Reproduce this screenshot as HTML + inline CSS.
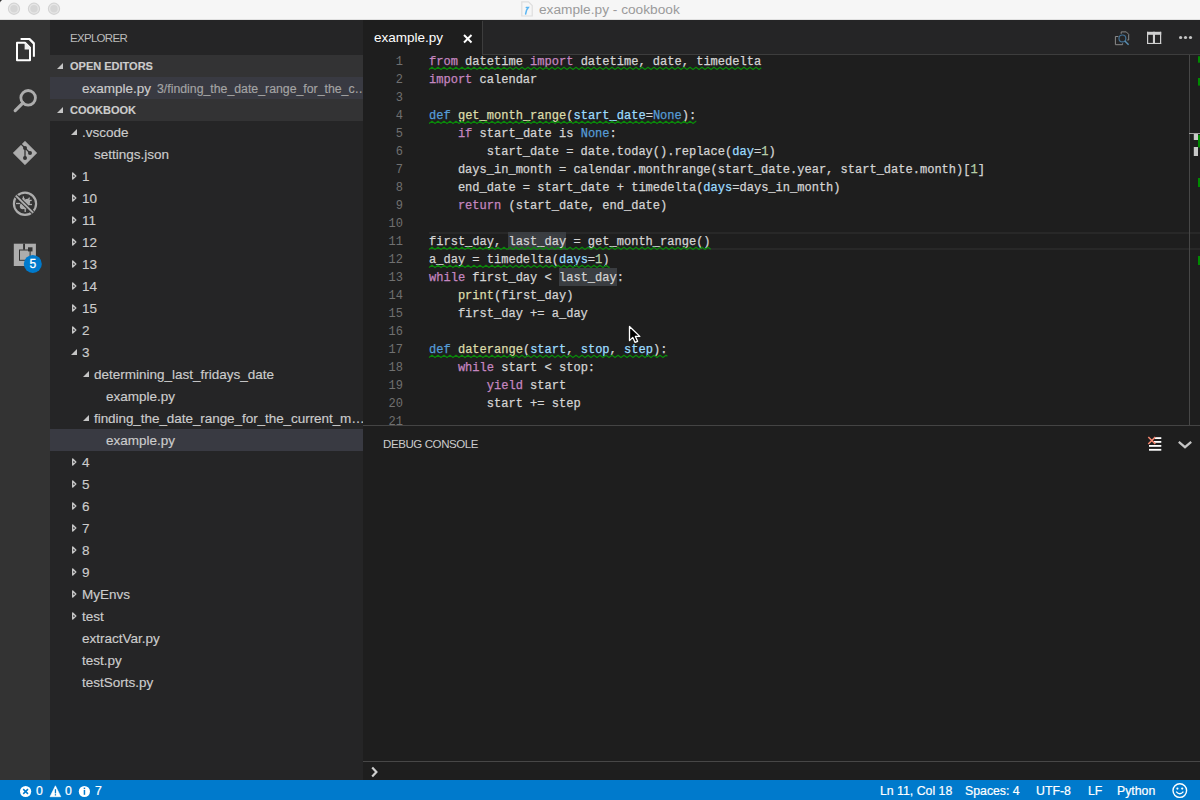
<!DOCTYPE html>
<html><head><meta charset="utf-8">
<style>
*{margin:0;padding:0;box-sizing:border-box}
html,body{width:1200px;height:800px;overflow:hidden;background:#1e1e1e;font-family:"Liberation Sans",sans-serif}
.abs{position:absolute}
#title{left:0;top:0;width:1200px;height:20px;background:#f6f6f6;border-bottom:1px solid #e0e0e0}
.tl{position:absolute;top:3px;width:12px;height:12px;border-radius:50%;background:#dadada;border:1px solid #cfcfcf}
#ttext{position:absolute;left:539px;top:1px;font-size:13.7px;line-height:17px;color:#9b9b9b;white-space:nowrap}
#act{left:0;top:20px;width:50px;height:760px;background:#333333}
#side{left:50px;top:20px;width:313px;height:760px;background:#252526;overflow:hidden}
.row{position:absolute;left:0;width:313px;height:22px;font-size:13.5px;line-height:23px;color:#cccccc;white-space:nowrap;-webkit-text-stroke:0.15px currentColor}
.hdr{background:#333334;font-weight:bold;font-size:11px;color:#cccccc}
.sel{background:#393a42}
.tw{position:absolute;width:0;height:0}
.tw.open{border-left:6px solid transparent;border-bottom:6px solid #c5c5c5;top:8px}
.twc{position:absolute;top:6px}
#tabs{left:363px;top:20px;width:837px;height:35px;background:#252526}
#tab{position:absolute;left:0;top:0;width:119px;height:35px;background:#1e1e1e;color:#ffffff;font-size:13.5px}
#editor{left:363px;top:55px;width:837px;height:370px;background:#1e1e1e;overflow:hidden}
.code{position:absolute;left:66px;margin-top:1px;font-family:"Liberation Mono",monospace;font-size:12.04px;line-height:18px;height:18px;color:#d4d4d4;white-space:pre;-webkit-text-stroke:0.25px currentColor}
.ln{position:absolute;left:0;margin-top:1px;width:40px;text-align:right;font-family:"Liberation Mono",monospace;font-size:12px;line-height:18px;height:18px;color:#707070}
.k{color:#c586c0}.d{color:#569cd6}.f{color:#dcdcaa}.p{color:#9cdcfe}.n{color:#b5cea8}
.curline{position:absolute;left:66px;width:771px;height:18px;border-top:2px solid #282828;border-bottom:2px solid #282828}
.wh{position:absolute;width:57.8px;height:18px;background:#3a3d41}
#panel{left:363px;top:425px;width:837px;height:355px;background:#1e1e1e;border-top:1px solid #444}
.st{position:absolute;top:4px;line-height:14px;font-size:12.3px;white-space:nowrap;-webkit-text-stroke:0.2px #fff}
#status{left:0;top:780px;width:1200px;height:20px;background:#007acc;color:#fff;font-size:12px}
</style></head>
<body>
<div id="title" class="abs">
  <svg style="position:absolute;left:0;top:0" width="70" height="19"><path d="M0,0 H2.2 Q0.6,0.6 0,2.6 Z" fill="#333"/><g id="tlc">
<circle cx="14" cy="8.75" r="5.6" fill="#e6e6e6" stroke="#d3d3d3" stroke-width="1.1"/><circle cx="14" cy="8.75" r="3.7" fill="#d6d6d6"/></g>
<circle cx="34" cy="8.75" r="5.6" fill="#e6e6e6" stroke="#d3d3d3" stroke-width="1.1"/><circle cx="34" cy="8.75" r="3.7" fill="#d6d6d6"/>
<circle cx="54" cy="8.75" r="5.6" fill="#e6e6e6" stroke="#d3d3d3" stroke-width="1.1"/><circle cx="54" cy="8.75" r="3.7" fill="#d6d6d6"/></svg>
  <svg style="position:absolute;left:519px;top:0" width="16" height="20"><path d="M2.8,1.8 H9.5 L13.2,5.5 V16 H2.8 Z" fill="#f6f6f6" stroke="#dedede" stroke-width="1.2"/><path d="M7.3,7.6 H9.3 L7.6,10 L6.6,14" fill="none" stroke="#5cb6f2" stroke-width="1.5" stroke-linecap="round"/></svg>
  <div id="ttext">example.py - cookbook</div>
</div>
<div id="act" class="abs"></div>
<svg class="abs" style="left:0;top:0" width="50" height="300" viewBox="0 0 50 300">
<g fill="none" stroke="#ffffff" stroke-width="2" stroke-linejoin="round">
<path d="M17,42.8 H25 L30,47.8 V60.2 H17 Z"/>
<path d="M20.6,38.9 H29.6 L33.9,43.2 V56.8"/><path d="M29.6,38.9 L33.9,43.2 L33.9,45 L28.6,39.7 Z" fill="#ffffff" stroke="none"/>
</g>
<path d="M24.6,42 L31,48.4 V49.5 H24.6 Z" fill="#eeeeee"/>
<g stroke="#adadad" fill="none">
<circle cx="28.15" cy="97.8" r="7.3" stroke-width="2.8"/>
<line x1="15.2" y1="110.6" x2="23" y2="102.8" stroke-width="3.2" stroke-linecap="round"/>
</g>
<path d="M25,141.2 L36.8,153 L25,164.8 L13.2,153 Z" fill="#adadad" stroke="#adadad" stroke-width="0.6" stroke-linejoin="round"/>
<g stroke="#333333" stroke-width="1.3" fill="none">
<line x1="20.4" y1="143.4" x2="25" y2="148"/>
<line x1="25" y1="148" x2="25" y2="158"/>
<line x1="25" y1="148" x2="30" y2="153"/>
</g>
<g fill="#333333"><circle cx="25" cy="148" r="2"/><circle cx="30" cy="153" r="2"/><circle cx="25" cy="158" r="2"/></g>
<circle cx="25" cy="203.75" r="11.1" stroke="#adadad" stroke-width="2.2" fill="none"/>
<ellipse cx="25" cy="204" rx="3.9" ry="6.3" transform="rotate(45 25 204)" fill="#adadad"/>
<g stroke="#adadad" stroke-width="1.3" fill="none">
<path d="M16,203.5 H20"/>
<path d="M23.4,196.4 V200.6"/>
<path d="M22,199 H25"/>
<path d="M28,204.5 H32"/>
<path d="M25.2,207.5 V212"/>
<path d="M24,208.5 H27"/>
<path d="M29.6,197.6 L28.4,199.4"/>
<path d="M27.5,200.4 H31.7"/>
</g>
<line x1="15.8" y1="195.6" x2="33" y2="212.6" stroke="#333333" stroke-width="4"/>
<line x1="15.8" y1="195.6" x2="33" y2="212.6" stroke="#adadad" stroke-width="2"/>
<g>
<rect x="13.8" y="243.7" width="22.1" height="22.3" fill="#adadad"/>
<rect x="23.1" y="243.7" width="1.9" height="6" fill="#333333"/>
<rect x="19" y="249.5" width="11.6" height="11.3" fill="#333333"/>
<rect x="20" y="250.5" width="9.6" height="9.3" fill="#adadad"/>
<rect x="28" y="247.3" width="4.5" height="4.1" fill="#333333"/>
</g>
<circle cx="32.8" cy="263.9" r="9" fill="#007acc"/>
<text x="32.8" y="268.2" font-family="Liberation Sans" font-size="12" fill="#ffffff" stroke="#ffffff" stroke-width="0.3" text-anchor="middle">5</text>
</svg>
<div id="side" class="abs">
<div style="position:absolute;left:20px;top:11px;font-size:11.5px;letter-spacing:-0.7px;line-height:14px;color:#bbbbbb">EXPLORER</div>
<div class="row hdr" style="top:35px"><i class="tw open" style="left:7px"></i><span style="position:absolute;left:20px">OPEN EDITORS</span></div>
<div class="row sel" style="top:57px"><span style="position:absolute;left:32px">example.py</span><span style="position:absolute;left:107px;top:1px;font-size:12.3px;color:#a4a4a4">3/finding_the_date_range_for_the_c&#8230;</span></div>
<div class="row hdr" style="top:79px"><i class="tw open" style="left:7px"></i><span style="position:absolute;left:20px">COOKBOOK</span></div>
<div class="row" style="top:101px"><i class="tw open" style="left:21px"></i><span style="position:absolute;left:32px">.vscode</span></div>
<div class="row" style="top:123px"><span style="position:absolute;left:44px">settings.json</span></div>
<div class="row" style="top:145px"><svg class="twc" style="left:21px" width="8" height="10"><path d="M1.7,2 L4.8,5 L1.7,8 Z" fill="none" stroke="#c5c5c5" stroke-width="1.4" stroke-linejoin="round"/></svg><span style="position:absolute;left:32px">1</span></div>
<div class="row" style="top:167px"><svg class="twc" style="left:21px" width="8" height="10"><path d="M1.7,2 L4.8,5 L1.7,8 Z" fill="none" stroke="#c5c5c5" stroke-width="1.4" stroke-linejoin="round"/></svg><span style="position:absolute;left:32px">10</span></div>
<div class="row" style="top:189px"><svg class="twc" style="left:21px" width="8" height="10"><path d="M1.7,2 L4.8,5 L1.7,8 Z" fill="none" stroke="#c5c5c5" stroke-width="1.4" stroke-linejoin="round"/></svg><span style="position:absolute;left:32px">11</span></div>
<div class="row" style="top:211px"><svg class="twc" style="left:21px" width="8" height="10"><path d="M1.7,2 L4.8,5 L1.7,8 Z" fill="none" stroke="#c5c5c5" stroke-width="1.4" stroke-linejoin="round"/></svg><span style="position:absolute;left:32px">12</span></div>
<div class="row" style="top:233px"><svg class="twc" style="left:21px" width="8" height="10"><path d="M1.7,2 L4.8,5 L1.7,8 Z" fill="none" stroke="#c5c5c5" stroke-width="1.4" stroke-linejoin="round"/></svg><span style="position:absolute;left:32px">13</span></div>
<div class="row" style="top:255px"><svg class="twc" style="left:21px" width="8" height="10"><path d="M1.7,2 L4.8,5 L1.7,8 Z" fill="none" stroke="#c5c5c5" stroke-width="1.4" stroke-linejoin="round"/></svg><span style="position:absolute;left:32px">14</span></div>
<div class="row" style="top:277px"><svg class="twc" style="left:21px" width="8" height="10"><path d="M1.7,2 L4.8,5 L1.7,8 Z" fill="none" stroke="#c5c5c5" stroke-width="1.4" stroke-linejoin="round"/></svg><span style="position:absolute;left:32px">15</span></div>
<div class="row" style="top:299px"><svg class="twc" style="left:21px" width="8" height="10"><path d="M1.7,2 L4.8,5 L1.7,8 Z" fill="none" stroke="#c5c5c5" stroke-width="1.4" stroke-linejoin="round"/></svg><span style="position:absolute;left:32px">2</span></div>
<div class="row" style="top:321px"><i class="tw open" style="left:21px"></i><span style="position:absolute;left:32px">3</span></div>
<div class="row" style="top:343px"><i class="tw open" style="left:33px"></i><span style="position:absolute;left:44px">determining_last_fridays_date</span></div>
<div class="row" style="top:365px"><span style="position:absolute;left:56px">example.py</span></div>
<div class="row" style="top:387px"><i class="tw open" style="left:33px"></i><span style="position:absolute;left:44px;letter-spacing:-0.06px">finding_the_date_range_for_the_current_m&#8230;</span></div>
<div class="row sel" style="top:409px"><span style="position:absolute;left:56px">example.py</span></div>
<div class="row" style="top:431px"><svg class="twc" style="left:21px" width="8" height="10"><path d="M1.7,2 L4.8,5 L1.7,8 Z" fill="none" stroke="#c5c5c5" stroke-width="1.4" stroke-linejoin="round"/></svg><span style="position:absolute;left:32px">4</span></div>
<div class="row" style="top:453px"><svg class="twc" style="left:21px" width="8" height="10"><path d="M1.7,2 L4.8,5 L1.7,8 Z" fill="none" stroke="#c5c5c5" stroke-width="1.4" stroke-linejoin="round"/></svg><span style="position:absolute;left:32px">5</span></div>
<div class="row" style="top:475px"><svg class="twc" style="left:21px" width="8" height="10"><path d="M1.7,2 L4.8,5 L1.7,8 Z" fill="none" stroke="#c5c5c5" stroke-width="1.4" stroke-linejoin="round"/></svg><span style="position:absolute;left:32px">6</span></div>
<div class="row" style="top:497px"><svg class="twc" style="left:21px" width="8" height="10"><path d="M1.7,2 L4.8,5 L1.7,8 Z" fill="none" stroke="#c5c5c5" stroke-width="1.4" stroke-linejoin="round"/></svg><span style="position:absolute;left:32px">7</span></div>
<div class="row" style="top:519px"><svg class="twc" style="left:21px" width="8" height="10"><path d="M1.7,2 L4.8,5 L1.7,8 Z" fill="none" stroke="#c5c5c5" stroke-width="1.4" stroke-linejoin="round"/></svg><span style="position:absolute;left:32px">8</span></div>
<div class="row" style="top:541px"><svg class="twc" style="left:21px" width="8" height="10"><path d="M1.7,2 L4.8,5 L1.7,8 Z" fill="none" stroke="#c5c5c5" stroke-width="1.4" stroke-linejoin="round"/></svg><span style="position:absolute;left:32px">9</span></div>
<div class="row" style="top:563px"><svg class="twc" style="left:21px" width="8" height="10"><path d="M1.7,2 L4.8,5 L1.7,8 Z" fill="none" stroke="#c5c5c5" stroke-width="1.4" stroke-linejoin="round"/></svg><span style="position:absolute;left:32px">MyEnvs</span></div>
<div class="row" style="top:585px"><svg class="twc" style="left:21px" width="8" height="10"><path d="M1.7,2 L4.8,5 L1.7,8 Z" fill="none" stroke="#c5c5c5" stroke-width="1.4" stroke-linejoin="round"/></svg><span style="position:absolute;left:32px">test</span></div>
<div class="row" style="top:607px"><span style="position:absolute;left:32px">extractVar.py</span></div>
<div class="row" style="top:629px"><span style="position:absolute;left:32px">test.py</span></div>
<div class="row" style="top:651px"><span style="position:absolute;left:32px">testSorts.py</span></div>
</div>
<div id="tabs" class="abs"><div id="tab"><span style="position:absolute;left:11px;top:10px;line-height:16px">example.py</span><svg style="position:absolute;left:100px;top:14px" width="10" height="10"><g stroke="#ffffff" stroke-width="1.9"><line x1="1" y1="1" x2="8.5" y2="8.5"/><line x1="8.5" y1="1" x2="1" y2="8.5"/></g></svg></div>
<div style="position:absolute;left:119px;top:1px;width:718px;height:34px;border-left:1px solid #3d3d3d;border-bottom:1px solid #3d3d3d"></div>
<svg style="position:absolute;left:0;top:0" width="837" height="35">
<g fill="none" stroke="#8a8a8a" stroke-width="1">
<path d="M758.2,13.8 V11.9 H763.3 L765.7,14.3 V20 H764.3"/>
<path d="M755.4,16.5 H752.4 V24.7 H759.6 V23.3"/>
</g>
<circle cx="759.4" cy="18.4" r="3.4" fill="none" stroke="#437296" stroke-width="1.2"/>
<line x1="761.9" y1="21" x2="765.6" y2="24.7" stroke="#5a8eb0" stroke-width="1.5"/>
<g fill="#d0d0d0">
<rect x="784" y="11.8" width="14.2" height="3"/>
<rect x="784" y="11.8" width="1.2" height="12.2"/>
<rect x="797" y="11.8" width="1.2" height="12.2"/>
<rect x="784" y="22.9" width="14.2" height="1.1"/>
<rect x="789.9" y="11.8" width="2.1" height="12.2"/>
</g>
<g fill="#c5c5c5"><circle cx="817.6" cy="17.5" r="1.6"/><circle cx="822.5" cy="17.5" r="1.6"/><circle cx="827.5" cy="17.5" r="1.6"/></g>
</svg>
</div>
<div id="editor" class="abs">
<div class="curline" style="top:177px"></div>
<div class="wh" style="left:145.3px;top:177px"></div>
<div class="wh" style="left:196px;top:213px"></div>
<div class="ln" style="top:-3px">1</div>
<div class="code" style="top:-3px"><span class="k">from</span> datetime <span class="k">import</span> datetime, date, timedelta</div>
<div class="ln" style="top:15px">2</div>
<div class="code" style="top:15px"><span class="k">import</span> calendar</div>
<div class="ln" style="top:33px">3</div>
<div class="ln" style="top:51px">4</div>
<div class="code" style="top:51px"><span class="d">def</span> <span class="f">get_month_range</span>(<span class="p">start_date</span>=<span class="d">None</span>):</div>
<div class="ln" style="top:69px">5</div>
<div class="code" style="top:69px">    <span class="k">if</span> start_date is <span class="d">None</span>:</div>
<div class="ln" style="top:87px">6</div>
<div class="code" style="top:87px">        start_date = date.today().replace(<span class="p">day</span>=<span class="n">1</span>)</div>
<div class="ln" style="top:105px">7</div>
<div class="code" style="top:105px">    days_in_month = calendar.monthrange(start_date.year, start_date.month)[<span class="n">1</span>]</div>
<div class="ln" style="top:123px">8</div>
<div class="code" style="top:123px">    end_date = start_date + timedelta(<span class="p">days</span>=days_in_month)</div>
<div class="ln" style="top:141px">9</div>
<div class="code" style="top:141px">    <span class="k">return</span> (start_date, end_date)</div>
<div class="ln" style="top:159px">10</div>
<div class="ln" style="top:177px">11</div>
<div class="code" style="top:177px">first_day, last_day = get_month_range()</div>
<div class="ln" style="top:195px">12</div>
<div class="code" style="top:195px">a_day = timedelta(<span class="p">days</span>=<span class="n">1</span>)</div>
<div class="ln" style="top:213px">13</div>
<div class="code" style="top:213px"><span class="k">while</span> first_day &lt; last_day:</div>
<div class="ln" style="top:231px">14</div>
<div class="code" style="top:231px">    <span class="f">print</span>(first_day)</div>
<div class="ln" style="top:249px">15</div>
<div class="code" style="top:249px">    first_day += a_day</div>
<div class="ln" style="top:267px">16</div>
<div class="ln" style="top:285px">17</div>
<div class="code" style="top:285px"><span class="d">def</span> <span class="f">daterange</span>(<span class="p">start</span>, <span class="p">stop</span>, <span class="p">step</span>):</div>
<div class="ln" style="top:303px">18</div>
<div class="code" style="top:303px">    <span class="k">while</span> start &lt; stop:</div>
<div class="ln" style="top:321px">19</div>
<div class="code" style="top:321px">        <span class="k">yield</span> start</div>
<div class="ln" style="top:339px">20</div>
<div class="code" style="top:339px">        start += step</div>
<div class="ln" style="top:357px">21</div>

<svg style="position:absolute;left:0;top:0" width="837" height="370"><path d="M66.0,14.5 L69.0,12.2 L72.0,14.5 L75.0,12.2 L78.0,14.5 L81.0,12.2 L84.0,14.5 L87.0,12.2 L90.0,14.5 L93.0,12.2 L96.0,14.5 L99.0,12.2 L102.0,14.5 L105.0,12.2 L108.0,14.5 L111.0,12.2 L114.0,14.5 L117.0,12.2 L120.0,14.5 L123.0,12.2 L126.0,14.5 L129.0,12.2 L132.0,14.5 L135.0,12.2 L138.0,14.5 L141.0,12.2 L144.0,14.5 L147.0,12.2 L150.0,14.5 L153.0,12.2 L156.0,14.5 L159.0,12.2 L162.0,14.5 L165.0,12.2 L168.0,14.5 L171.0,12.2 L174.0,14.5 L177.0,12.2 L180.0,14.5 L183.0,12.2 L186.0,14.5 L189.0,12.2 L192.0,14.5 L195.0,12.2 L198.0,14.5 L201.0,12.2 L204.0,14.5 L207.0,12.2 L210.0,14.5 L213.0,12.2 L216.0,14.5 L219.0,12.2 L222.0,14.5 L225.0,12.2 L228.0,14.5 L231.0,12.2 L234.0,14.5 L237.0,12.2 L240.0,14.5 L243.0,12.2 L246.0,14.5 L249.0,12.2 L252.0,14.5 L255.0,12.2 L258.0,14.5 L261.0,12.2 L264.0,14.5 L267.0,12.2 L270.0,14.5 L273.0,12.2 L276.0,14.5 L279.0,12.2 L282.0,14.5 L285.0,12.2 L288.0,14.5 L291.0,12.2 L294.0,14.5 L297.0,12.2 L300.0,14.5 L303.0,12.2 L306.0,14.5 L309.0,12.2 L312.0,14.5 L315.0,12.2 L318.0,14.5 L321.0,12.2 L324.0,14.5 L327.0,12.2 L330.0,14.5 L333.0,12.2 L336.0,14.5 L339.0,12.2 L342.0,14.5 L345.0,12.2 L348.0,14.5 L351.0,12.2 L354.0,14.5 L357.0,12.2 L360.0,14.5 L363.0,12.2 L366.0,14.5 L369.0,12.2 L372.0,14.5 L375.0,12.2 L378.0,14.5 L381.0,12.2 L384.0,14.5 L387.0,12.2 L390.0,14.5 L393.0,12.2 L396.0,14.5 L398.3,12.73 M66.0,68.5 L69.0,66.2 L72.0,68.5 L75.0,66.2 L78.0,68.5 L81.0,66.2 L84.0,68.5 L87.0,66.2 L90.0,68.5 L93.0,66.2 L96.0,68.5 L99.0,66.2 L102.0,68.5 L105.0,66.2 L108.0,68.5 L111.0,66.2 L114.0,68.5 L117.0,66.2 L120.0,68.5 L123.0,66.2 L126.0,68.5 L129.0,66.2 L132.0,68.5 L135.0,66.2 L138.0,68.5 L141.0,66.2 L144.0,68.5 L147.0,66.2 L150.0,68.5 L153.0,66.2 L156.0,68.5 L159.0,66.2 L162.0,68.5 L165.0,66.2 L168.0,68.5 L171.0,66.2 L174.0,68.5 L177.0,66.2 L180.0,68.5 L183.0,66.2 L186.0,68.5 L189.0,66.2 L192.0,68.5 L195.0,66.2 L198.0,68.5 L201.0,66.2 L204.0,68.5 L207.0,66.2 L210.0,68.5 L213.0,66.2 L216.0,68.5 L219.0,66.2 L222.0,68.5 L225.0,66.2 L228.0,68.5 L231.0,66.2 L234.0,68.5 L237.0,66.2 L240.0,68.5 L243.0,66.2 L246.0,68.5 L249.0,66.2 L252.0,68.5 L255.0,66.2 L258.0,68.5 L261.0,66.2 L264.0,68.5 L267.0,66.2 L270.0,68.5 L273.0,66.2 L276.0,68.5 L279.0,66.2 L282.0,68.5 L285.0,66.2 L288.0,68.5 L291.0,66.2 L294.0,68.5 L297.0,66.2 L300.0,68.5 L303.0,66.2 L306.0,68.5 L309.0,66.2 L312.0,68.5 L315.0,66.2 L318.0,68.5 L321.0,66.2 L324.0,68.5 L327.0,66.2 L330.0,68.5 L333.0,66.2 L333.3,66.42 M66.0,194.5 L69.0,192.2 L72.0,194.5 L75.0,192.2 L78.0,194.5 L81.0,192.2 L84.0,194.5 L87.0,192.2 L90.0,194.5 L93.0,192.2 L96.0,194.5 L99.0,192.2 L102.0,194.5 L105.0,192.2 L108.0,194.5 L111.0,192.2 L114.0,194.5 L117.0,192.2 L120.0,194.5 L123.0,192.2 L126.0,194.5 L129.0,192.2 L132.0,194.5 L135.0,192.2 L138.0,194.5 L141.0,192.2 L144.0,194.5 L147.0,192.2 L150.0,194.5 L153.0,192.2 L156.0,194.5 L159.0,192.2 L162.0,194.5 L165.0,192.2 L168.0,194.5 L171.0,192.2 L174.0,194.5 L177.0,192.2 L180.0,194.5 L183.0,192.2 L186.0,194.5 L189.0,192.2 L192.0,194.5 L195.0,192.2 L198.0,194.5 L201.0,192.2 L204.0,194.5 L207.0,192.2 L210.0,194.5 L213.0,192.2 L216.0,194.5 L219.0,192.2 L222.0,194.5 L225.0,192.2 L228.0,194.5 L231.0,192.2 L234.0,194.5 L237.0,192.2 L240.0,194.5 L243.0,192.2 L246.0,194.5 L249.0,192.2 L252.0,194.5 L255.0,192.2 L258.0,194.5 L261.0,192.2 L264.0,194.5 L267.0,192.2 L270.0,194.5 L273.0,192.2 L276.0,194.5 L279.0,192.2 L282.0,194.5 L285.0,192.2 L288.0,194.5 L291.0,192.2 L294.0,194.5 L297.0,192.2 L300.0,194.5 L303.0,192.2 L306.0,194.5 L309.0,192.2 L312.0,194.5 L315.0,192.2 L318.0,194.5 L321.0,192.2 L324.0,194.5 L327.0,192.2 L330.0,194.5 L333.0,192.2 L336.0,194.5 L339.0,192.2 L342.0,194.5 L345.0,192.2 L347.7,194.30 M66.0,212.5 L69.0,210.2 L72.0,212.5 L75.0,210.2 L78.0,212.5 L81.0,210.2 L84.0,212.5 L87.0,210.2 L90.0,212.5 L93.0,210.2 L96.0,212.5 L99.0,210.2 L102.0,212.5 L105.0,210.2 L108.0,212.5 L111.0,210.2 L114.0,212.5 L117.0,210.2 L120.0,212.5 L123.0,210.2 L126.0,212.5 L129.0,210.2 L132.0,212.5 L135.0,210.2 L138.0,212.5 L141.0,210.2 L144.0,212.5 L147.0,210.2 L150.0,212.5 L153.0,210.2 L156.0,212.5 L159.0,210.2 L162.0,212.5 L165.0,210.2 L168.0,212.5 L171.0,210.2 L174.0,212.5 L177.0,210.2 L180.0,212.5 L183.0,210.2 L186.0,212.5 L189.0,210.2 L192.0,212.5 L195.0,210.2 L198.0,212.5 L201.0,210.2 L204.0,212.5 L207.0,210.2 L210.0,212.5 L213.0,210.2 L216.0,212.5 L219.0,210.2 L222.0,212.5 L225.0,210.2 L228.0,212.5 L231.0,210.2 L234.0,212.5 L237.0,210.2 L240.0,212.5 L243.0,210.2 L246.0,212.5 L246.6,212.04 M66.0,302.5 L69.0,300.2 L72.0,302.5 L75.0,300.2 L78.0,302.5 L81.0,300.2 L84.0,302.5 L87.0,300.2 L90.0,302.5 L93.0,300.2 L96.0,302.5 L99.0,300.2 L102.0,302.5 L105.0,300.2 L108.0,302.5 L111.0,300.2 L114.0,302.5 L117.0,300.2 L120.0,302.5 L123.0,300.2 L126.0,302.5 L129.0,300.2 L132.0,302.5 L135.0,300.2 L138.0,302.5 L141.0,300.2 L144.0,302.5 L147.0,300.2 L150.0,302.5 L153.0,300.2 L156.0,302.5 L159.0,300.2 L162.0,302.5 L165.0,300.2 L168.0,302.5 L171.0,300.2 L174.0,302.5 L177.0,300.2 L180.0,302.5 L183.0,300.2 L186.0,302.5 L189.0,300.2 L192.0,302.5 L195.0,300.2 L198.0,302.5 L201.0,300.2 L204.0,302.5 L207.0,300.2 L210.0,302.5 L213.0,300.2 L216.0,302.5 L219.0,300.2 L222.0,302.5 L225.0,300.2 L228.0,302.5 L231.0,300.2 L234.0,302.5 L237.0,300.2 L240.0,302.5 L243.0,300.2 L246.0,302.5 L249.0,300.2 L252.0,302.5 L255.0,300.2 L258.0,302.5 L261.0,300.2 L264.0,302.5 L267.0,300.2 L270.0,302.5 L273.0,300.2 L276.0,302.5 L279.0,300.2 L282.0,302.5 L285.0,300.2 L288.0,302.5 L291.0,300.2 L294.0,302.5 L297.0,300.2 L300.0,302.5 L303.0,300.2 L304.4,301.27" fill="none" stroke="#0a880a" stroke-width="1.15"/></svg>
<svg style="position:absolute;left:0;top:0" width="837" height="370">
<line x1="826.5" y1="0" x2="826.5" y2="370" stroke="#474747" stroke-width="1"/>
<g fill="#008a00">
<rect x="835" y="1.2" width="2" height="6.5"/>
<rect x="835" y="23" width="2" height="7.6"/>
<rect x="835" y="80" width="2" height="12.5"/>
<rect x="835" y="123" width="2" height="9"/>
<rect x="835" y="201" width="2" height="9"/>
</g>
<g fill="#c8c8c8">
<rect x="830.8" y="78" width="4.2" height="7"/>
<rect x="830.8" y="92" width="4.2" height="9"/>
</g>
<line x1="826" y1="78.5" x2="837" y2="78.5" stroke="#a0a0a0" stroke-width="1"/>
</svg>
</div>
<div id="panel" class="abs">
<div style="position:absolute;left:20px;top:11px;font-size:11.5px;letter-spacing:-0.4px;line-height:14px;color:#cccccc">DEBUG CONSOLE</div>
<svg style="position:absolute;left:0;top:0" width="837" height="355">
<g fill="#ffffff">
<rect x="791.5" y="11.2" width="6.8" height="1.8"/>
<rect x="791" y="15" width="7.3" height="1.8"/>
<rect x="786" y="19" width="12.3" height="1.8"/>
<rect x="786" y="22.9" width="12.3" height="1.8"/>
</g>
<g stroke="#f48771" stroke-width="1.6"><line x1="785.3" y1="11" x2="792.3" y2="18"/><line x1="792.3" y1="11" x2="785.3" y2="18"/></g>
<path d="M815.8,15.8 L822,21.2 L828.2,15.8" fill="none" stroke="#c5c5c5" stroke-width="2.2"/>
<line x1="0" y1="335.5" x2="837" y2="335.5" stroke="#474747" stroke-width="1"/>
<path d="M9.2,341.6 L13.4,346 L9.2,350.4" fill="none" stroke="#d0d0d0" stroke-width="2.2"/>
</svg>
</div>
<div id="status" class="abs">
<svg style="position:absolute;left:0;top:0" width="1200" height="20">
<circle cx="25.6" cy="11.5" r="5.6" fill="#ffffff"/>
<g stroke="#007acc" stroke-width="1.5"><line x1="23.2" y1="9.1" x2="28" y2="13.9"/><line x1="28" y1="9.1" x2="23.2" y2="13.9"/></g>
<path d="M55.4,5.8 L60.8,16.7 L50,16.7 Z" fill="#ffffff" stroke="#ffffff" stroke-width="0.6" stroke-linejoin="round"/>
<rect x="54.8" y="9.2" width="1.3" height="4.2" fill="#007acc"/><rect x="54.8" y="14.2" width="1.3" height="1.3" fill="#007acc"/>
<circle cx="84.4" cy="11.5" r="5.6" fill="#ffffff"/>
<rect x="83.7" y="10" width="1.5" height="4.8" fill="#007acc"/><rect x="83.7" y="7.6" width="1.5" height="1.5" fill="#007acc"/>
<circle cx="1179.8" cy="10.6" r="6.8" fill="none" stroke="#ffffff" stroke-width="1.4"/>
<circle cx="1177.4" cy="8.6" r="1.1" fill="#ffffff"/><circle cx="1182.2" cy="8.6" r="1.1" fill="#ffffff"/>
<path d="M1176.2,11.6 Q1179.8,16 1183.4,11.6" fill="none" stroke="#ffffff" stroke-width="1.4"/>
</svg>
<span class="st" style="left:36px">0</span>
<span class="st" style="left:65px">0</span>
<span class="st" style="left:95px">7</span>
<span class="st" style="left:880px">Ln 11, Col 18</span>
<span class="st" style="left:965px">Spaces: 4</span>
<span class="st" style="left:1036px">UTF-8</span>
<span class="st" style="left:1088px">LF</span>
<span class="st" style="left:1117px">Python</span>
</div>
<svg style="position:absolute;left:620px;top:320px" width="30" height="30"><path d="M9.5,6.5 L9.5,20.6 L12.8,17.4 L15.1,22.4 L17.6,21.3 L15.4,16.4 L19.8,16.4 Z" fill="#000000" stroke="#ffffff" stroke-width="1.3" stroke-linejoin="round"/></svg>
</body></html>
